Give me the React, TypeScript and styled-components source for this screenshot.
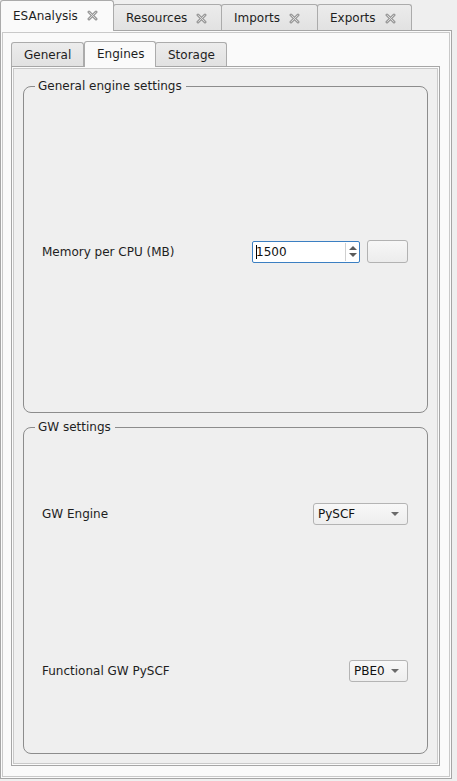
import React from "react";
import styled, { createGlobalStyle } from "styled-components";

const Global = createGlobalStyle`
  html, body { margin: 0; padding: 0; background: #efefef; }
  body { font-family: "DejaVu Sans", "Liberation Sans", sans-serif; font-size: 12px; color: #1e1e1e; }
  * { box-sizing: border-box; }
`;

const Window = styled.div`
  width: 457px;
  height: 781px;
  background: #efefef;
  display: flex;
  flex-direction: column;
  overflow: hidden;
`;

const TabBar = styled.div<{ $h: number }>`
  display: flex;
  align-items: flex-end;
  height: ${(p) => p.$h}px;
  flex-shrink: 0;
`;

const Tab = styled.div<{ $active?: boolean; $h: number; $ah: number; $w: number }>`
  position: relative;
  z-index: ${(p) => (p.$active ? 2 : 0)};
  width: ${(p) => p.$w}px;
  height: ${(p) => (p.$active ? p.$ah : p.$h)}px;
  margin-left: ${(p) => (p.$active ? 0 : -1)}px;
  display: flex;
  align-items: center;
  gap: 9px;
  padding: ${(p) => (p.$active ? "0 0 1px 12px" : "0 0 0 12px")};
  border: 1px solid #ababab;
  border-bottom: none;
  border-radius: 3px 3px 0 0;
  background: ${(p) => (p.$active ? "#fafafa" : "linear-gradient(#ececec, #e1e1e1)")};
  color: #1e1e1e;
  white-space: nowrap;
  &:first-child { margin-left: 0; }
`;

const Pane = styled.div<{ $bg: string; $w: number; $h: number; $pad: string }>`
  position: relative;
  z-index: 1;
  margin-top: -1px;
  width: ${(p) => p.$w}px;
  height: ${(p) => p.$h}px;
  background: ${(p) => p.$bg};
  border: 1px solid #a6a6a6;
  box-shadow: inset 0 0 0 1px #fbfbfb, inset 0 0 0 2px #c9c9c9;
  padding: ${(p) => p.$pad};
  display: flex;
  flex-direction: column;
`;

const Groups = styled.div`
  flex: 1;
  display: flex;
  flex-direction: column;
  gap: 7px;
`;

const Group = styled.fieldset`
  flex: 1;
  min-width: 0;
  margin: 0;
  padding: 0 19px 3px 18px;
  border: 1px solid #8c8c8c;
  border-radius: 8px;
  display: flex;
  flex-direction: column;
`;

const Legend = styled.legend`
  margin-left: -7px;
  padding: 0 4px 0 3px;
  line-height: 15px;
  color: #1e1e1e;
`;

const Rows = styled.div`
  flex: 1;
  display: flex;
  flex-direction: column;
`;

const Row = styled.div`
  flex: 1;
  display: flex;
  align-items: center;
  justify-content: space-between;
`;

const Label = styled.span`
  color: #1e1e1e;
`;

const Controls = styled.div`
  display: flex;
  align-items: center;
  gap: 7px;
`;

const SpinBox = styled.div`
  width: 108px;
  height: 22px;
  background: #ffffff;
  border: 1px solid #3b7fc2;
  border-radius: 2px;
  display: flex;
  align-items: stretch;
`;

const SpinText = styled.div`
  flex: 1;
  display: flex;
  align-items: center;
  padding-left: 3px;
  color: #111;
`;

const Caret = styled.span`
  display: inline-block;
  width: 1px;
  height: 14px;
  background: #000;
  margin-right: -1px;
`;

const SpinArrows = styled.div`
  width: 14px;
  margin: 1px 0;
  border-left: 1px solid #d0d0d0;
  display: flex;
  flex-direction: column;
  align-items: center;
  justify-content: center;
  gap: 3px;
`;

const Tri = styled.span<{ $up?: boolean; $w: number; $c: string }>`
  width: 0;
  height: 0;
  border-left: ${(p) => p.$w / 2}px solid transparent;
  border-right: ${(p) => p.$w / 2}px solid transparent;
  ${(p) =>
    p.$up
      ? `border-bottom: 4px solid ${p.$c};`
      : `border-top: 4px solid ${p.$c};`}
`;

const PushButton = styled.div`
  width: 41px;
  height: 23px;
  border: 1px solid #b2b2b2;
  border-radius: 3px;
  background: linear-gradient(#f7f7f7, #ececec);
`;

const Combo = styled.div<{ $w: number }>`
  width: ${(p) => p.$w}px;
  height: 22px;
  border: 1px solid #b4b4b4;
  border-radius: 3px;
  background: linear-gradient(#f8f8f8, #eeeeee);
  display: flex;
  align-items: center;
  justify-content: space-between;
  padding: 0 8px 0 4px;
  color: #111;
`;

const CloseIcon = () => (
  <svg width="11" height="11" viewBox="0 0 11 11">
    <path d="M2 2 L9 9 M9 2 L2 9" stroke="#9a9a9a" strokeWidth="3" strokeLinecap="round" />
    <path d="M2.3 2.3 L8.7 8.7 M8.7 2.3 L2.3 8.7" stroke="#dcdcdc" strokeWidth="1" />
  </svg>
);

const outerTabs = [
  { name: "ESAnalysis", w: 114, active: true },
  { name: "Resources", w: 109 },
  { name: "Imports", w: 97 },
  { name: "Exports", w: 95 },
];

const innerTabs = [
  { name: "General", w: 73 },
  { name: "Engines", w: 72, active: true },
  { name: "Storage", w: 72 },
];

export default function App() {
  return (
    <>
      <Global />
      <Window>
        <TabBar $h={31}>
          {outerTabs.map((t) => (
            <Tab key={t.name} $active={t.active} $h={27} $ah={31} $w={t.w}>
              {t.name}
              <CloseIcon />
            </Tab>
          ))}
        </TabBar>
        <Pane $bg="#fafafa" $w={452} $h={749} $pad="10px 0 0 10px">
          <TabBar $h={26}>
            {innerTabs.map((t) => (
              <Tab key={t.name} $active={t.active} $h={25} $ah={26} $w={t.w}>
                {t.name}
              </Tab>
            ))}
          </TabBar>
          <Pane $bg="#efefef" $w={429} $h={700} $pad="12px 11px 11px 11px">
            <Groups>
              <Group>
                <Legend>General engine settings</Legend>
                <Rows>
                  <Row>
                    <Label>Memory per CPU (MB)</Label>
                    <Controls>
                      <SpinBox>
                        <SpinText>
                          <Caret />
                          1500
                        </SpinText>
                        <SpinArrows>
                          <Tri $up $w={8} $c="#5a5a5a" />
                          <Tri $w={8} $c="#5a5a5a" />
                        </SpinArrows>
                      </SpinBox>
                      <PushButton />
                    </Controls>
                  </Row>
                </Rows>
              </Group>
              <Group>
                <Legend>GW settings</Legend>
                <Rows>
                  <Row>
                    <Label>GW Engine</Label>
                    <Combo $w={95}>
                      PySCF
                      <Tri $w={8} $c="#6a6a6a" />
                    </Combo>
                  </Row>
                  <Row>
                    <Label>Functional GW PySCF</Label>
                    <Combo $w={59}>
                      PBE0
                      <Tri $w={8} $c="#6a6a6a" />
                    </Combo>
                  </Row>
                </Rows>
              </Group>
            </Groups>
          </Pane>
        </Pane>
      </Window>
    </>
  );
}
